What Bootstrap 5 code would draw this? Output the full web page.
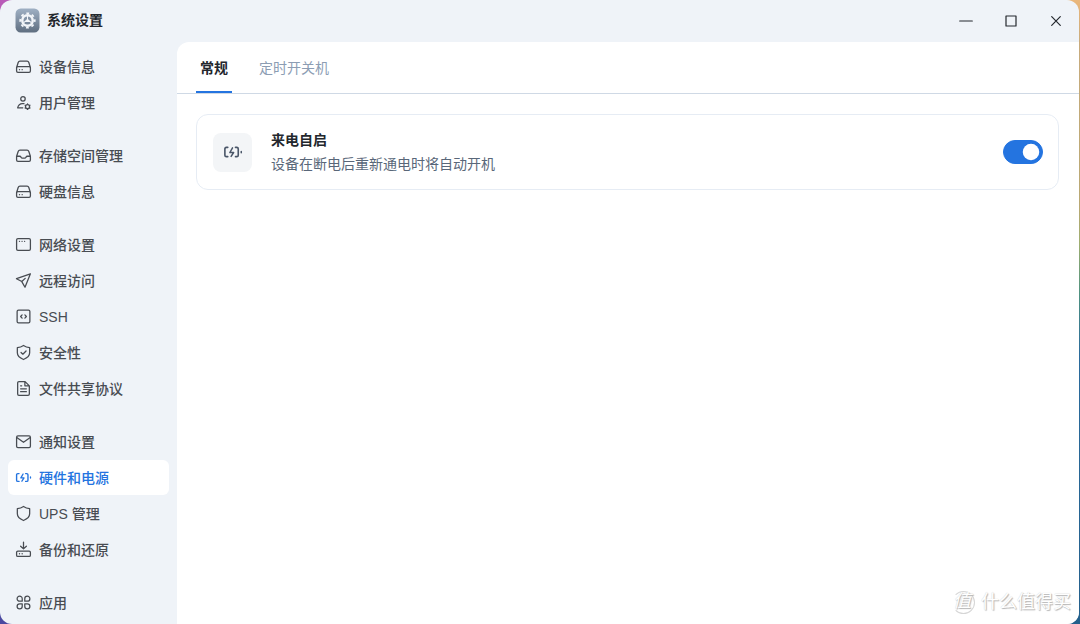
<!DOCTYPE html>
<html lang="zh-CN">
<head>
<meta charset="utf-8">
<meta name="viewport" content="width=device-width, initial-scale=1">
<title>系统设置</title>
<link href="https://cdn.jsdelivr.net/npm/bootstrap@5.3.0/dist/css/bootstrap.min.css" rel="stylesheet">
<style>
  :root { --accent: #2474e0; --chrome: #eff3f8; --ink: #23272d; }
  body { font-family: "Liberation Sans", "Noto Sans CJK SC", sans-serif; font-size: 14px; line-height: 20px; color: var(--ink);
    background: linear-gradient(#b95bb8, #4a49a0) left / 50% 100% no-repeat,
      linear-gradient(#eab77c, #c8ab7d 7%, #b9a873 33%, #9fae70 39%, #4f9280 47%, #2a6a9c 57%, #24608c) right / 50% 100% no-repeat; }
  .window { background: var(--chrome); border-radius: 12px; margin-right: 1px; overflow: hidden; }
  .titlebar { height: 42px; padding: 0 1px 2px 15px; }
  .titlebar h1 { font-size: 14px; line-height: 20px; margin-left: 7px; }
  .win-btn { width: 45px; height: 40px; border: 0; background: none; color: #24282e; }
  .sidebar { width: 177px; padding: 7px 8px 0; overflow: hidden; }
  .menu-group { margin-bottom: 18px; display: grid; gap: 1px; }
  .menu-link { height: 35px; padding: 0 7px; gap: 7px; border-radius: 6px; color: #484c52; text-decoration: none; white-space: nowrap; font-weight: 500; }
  .menu-link.active { background: #fff; color: var(--accent); }
  .icon { fill: none; stroke: currentColor; stroke-width: 1.2; stroke-linecap: round; stroke-linejoin: round; flex: none; }
  .pane { background: #fff; border-top-left-radius: 12px; min-width: 0; }
  .tabs { height: 52px; padding-left: 19px; gap: 23px; border-bottom: 1px solid #cfd9e5; }
  .tab-btn { border: 0; background: none; padding: 2px 4px 0; color: #8c9db3; border-bottom: 2px solid transparent; }
  .tab-btn.active { color: var(--ink); font-weight: 700; border-color: var(--accent); }
  .setting { margin: 20px 20px 0 19px; padding: 15px 15px 15px 16px; gap: 19px; border: 1px solid #e6ecf4; border-radius: 12px; }
  .tile { width: 39px; height: 39px; border-radius: 8px; background: #f3f5f7; color: #4a5668; }
  .setting label { line-height: 20px; }
  .setting p { color: #596779; line-height: 20px; margin-top: 4px; }
  .form-switch .toggle { width: 40px; height: 24px; margin: 0; float: none; }
  .form-switch .toggle:checked { background-color: var(--accent); border-color: var(--accent); }
  .form-switch .toggle:focus { box-shadow: none; }
  .watermark { right: 8px; bottom: 10px; gap: 6px; color: #fff; font-size: 18px; line-height: 24px; text-shadow: 1px 1px 1px #b4b4b4, 0 0 1px #c8c8c8; pointer-events: none; }
  .seal { width: 23px; height: 23px; border: 1px solid #d6d6d6; border-left-color: transparent; border-radius: 50%; line-height: 18px; font-style: italic; padding-right: 4px; }
</style>
</head>
<body>
<svg class="d-none" aria-hidden="true">
  <symbol id="drive" viewBox="0 0 16 16"><path d="M1.5 9 3 4.2Q3.4 3 4.700 3h6.600q1.300 0 1.700 1.200L14.500 9v3.200q0 1.300-1.300 1.300H2.800q-1.300 0-1.300-1.300V9Zm0 0q.2-.8 1.200-.8h10.600q1 0 1.200.8M4.200 11h.1M6.700 11h.1"/></symbol>
  <symbol id="user" viewBox="0 0 16 16"><circle cx="7.500" cy="4.500" r="2.100"/><path d="M8.500 9H7q-3.600 0-4.500 4h4.800"/><circle cx="11.800" cy="11.900" r="1.900"/><path d="M11.800 9.300v.4m0 4.400v.4m-2.300-3.900.4.200m3.800 2.200.4.200m-4.600 0 .4-.2m3.800-2.200.4-.2"/></symbol>
  <symbol id="inbox" viewBox="0 0 16 16"><path d="M1.500 8.700 3 4.200Q3.400 3 4.700 3h6.600q1.300 0 1.700 1.200l1.500 4.500v3.500q0 1.300-1.300 1.300H2.800q-1.300 0-1.300-1.300Zm0 0h2.800q1 0 1.400.9.400.9 1.300.9h2q.9 0 1.300-.9.400-.9 1.400-.9h2.800"/></symbol>
  <symbol id="network" viewBox="0 0 16 16"><rect x="1.500" y="2.500" width="13" height="11" rx="1.300"/><path d="M4.200 5h.1M6.600 5h.1M9 5h.1"/></symbol>
  <symbol id="plane" viewBox="0 0 16 16"><path d="M14.500 1.700 1.400 6.300l5 2.700 3 5.300ZM6.400 9l3.200-3"/></symbol>
  <symbol id="code" viewBox="0 0 16 16"><rect x="2" y="2" width="12" height="12" rx="1.300"/><path d="M6.700 6.500 5.300 8l1.400 1.500M9.300 6.500 10.700 8 9.300 9.500"/></symbol>
  <symbol id="shield" viewBox="0 0 16 16"><path d="M8 1.400q2.500 1.700 5.800 2.100v4.800q0 4-5.800 6.300-5.800-2.300-5.800-6.300V3.500Q5.500 3.100 8 1.400Z"/></symbol>
  <symbol id="check" viewBox="0 0 16 16"><path d="m5.700 8 1.700 1.600 3-3"/></symbol>
  <symbol id="file" viewBox="0 0 16 16"><path d="M3.700 1.500h5.800L13.500 5.500v7.700q0 1.300-1.300 1.300H3.700q-1.200 0-1.200-1.300V2.700q0-1.200 1.200-1.200Zm5.600 0v4h4.200M5.300 5.500h1M5.300 8.300h5.400M5.300 11h5.400"/></symbol>
  <symbol id="mail" viewBox="0 0 16 16"><rect x="1.500" y="2.700" width="13" height="11" rx="1.300"/><path d="m2 4.500 6 4.300 6-4.300"/></symbol>
  <symbol id="battery" viewBox="0 0 16 16"><path stroke-width="1.300" d="M3.800 4.300H2.700q-1.200 0-1.200 1.200v5q0 1.200 1.200 1.200h1.100m6.200-7.400h1q1.200 0 1.200 1.200v5q0 1.200-1.200 1.200h-1"/><path stroke-width="1.200" d="M7.600 4.700 5.500 8.400h3L6.500 11.500M14.600 7.500v1"/></symbol>
  <symbol id="backup" viewBox="0 0 16 16"><path d="M8 1v6.200M5.300 4.900 8 7.400l2.700-2.500"/><rect x="1.500" y="9.500" width="13" height="5" rx="1.200"/><path d="M4.200 12h.1M6.700 12h.1"/></symbol>
  <symbol id="apps" viewBox="0 0 16 16"><path d="M6.800 6.800H4.400a2.400 2.400 0 1 1 2.400-2.400ZM9.200 6.800V4.400a2.400 2.400 0 1 1 2.400 2.400ZM6.800 9.200v2.400a2.400 2.400 0 1 1-2.400-2.400ZM9.200 9.200h2.400a2.400 2.400 0 1 1-2.400 2.400Z"/></symbol>
</svg>
<div class="window vh-100 d-flex flex-column position-relative">
  <header class="titlebar d-flex align-items-center">
    <svg width="25" height="25" viewBox="0 0 24 24" aria-hidden="true">
      <defs><linearGradient id="tileFill" x2="0" y2="1"><stop stop-color="#9fb0c4"/><stop offset="1" stop-color="#5f6e80"/></linearGradient></defs>
      <rect x=".5" y=".5" width="23" height="23" rx="5" fill="url(#tileFill)"/>
      <circle cx="12" cy="12" r="5" fill="none" stroke="#f2f5f9" stroke-width="2.400"/>
      <circle cx="12" cy="12" r="6.900" fill="none" stroke="#f2f5f9" stroke-width="1.800" stroke-dasharray="2.700 2.719" stroke-dashoffset="1.350"/>
      <path d="M12 7v4l-3.600 3M12 11l3.600 3M12 10.500l1.500 2.500h-3Z" fill="none" stroke="#f2f5f9" stroke-width="1"/>
    </svg>
    <h1 class="fw-bold mb-0 me-auto">系统设置</h1>
    <button class="win-btn" aria-label="最小化"><svg class="icon" width="14" height="14"><path d="M.7 7h12.600"/></svg></button>
    <button class="win-btn" aria-label="最大化"><svg class="icon" width="14" height="14"><path d="M2 2h10v10H2Z"/></svg></button>
    <button class="win-btn" aria-label="关闭"><svg class="icon" width="14" height="14"><path d="m2.700 2.700 8.600 8.600m0-8.600-8.600 8.600"/></svg></button>
  </header>
  <div class="d-flex flex-grow-1">
    <nav class="sidebar flex-shrink-0" aria-label="设置">
      <div class="menu-group">
        <a href="#" class="menu-link d-flex align-items-center"><svg class="icon" width="17" height="17"><use href="#drive"/></svg>设备信息</a>
        <a href="#" class="menu-link d-flex align-items-center"><svg class="icon" width="17" height="17"><use href="#user"/></svg>用户管理</a>
      </div>
      <div class="menu-group">
        <a href="#" class="menu-link d-flex align-items-center"><svg class="icon" width="17" height="17"><use href="#inbox"/></svg>存储空间管理</a>
        <a href="#" class="menu-link d-flex align-items-center"><svg class="icon" width="17" height="17"><use href="#drive"/></svg>硬盘信息</a>
      </div>
      <div class="menu-group">
        <a href="#" class="menu-link d-flex align-items-center"><svg class="icon" width="17" height="17"><use href="#network"/></svg>网络设置</a>
        <a href="#" class="menu-link d-flex align-items-center"><svg class="icon" width="17" height="17"><use href="#plane"/></svg>远程访问</a>
        <a href="#" class="menu-link d-flex align-items-center"><svg class="icon" width="17" height="17"><use href="#code"/></svg>SSH</a>
        <a href="#" class="menu-link d-flex align-items-center"><svg class="icon" width="17" height="17"><use href="#shield"/><use href="#check"/></svg>安全性</a>
        <a href="#" class="menu-link d-flex align-items-center"><svg class="icon" width="17" height="17"><use href="#file"/></svg>文件共享协议</a>
      </div>
      <div class="menu-group">
        <a href="#" class="menu-link d-flex align-items-center"><svg class="icon" width="17" height="17"><use href="#mail"/></svg>通知设置</a>
        <a href="#" class="menu-link active d-flex align-items-center" aria-current="page"><svg class="icon" width="17" height="17"><use href="#battery"/></svg>硬件和电源</a>
        <a href="#" class="menu-link d-flex align-items-center"><svg class="icon" width="17" height="17"><use href="#shield"/></svg>UPS 管理</a>
        <a href="#" class="menu-link d-flex align-items-center"><svg class="icon" width="17" height="17"><use href="#backup"/></svg>备份和还原</a>
      </div>
      <div class="menu-group mb-0">
        <a href="#" class="menu-link d-flex align-items-center"><svg class="icon" width="17" height="17"><use href="#apps"/></svg>应用</a>
      </div>
    </nav>
    <main class="pane flex-grow-1">
      <div class="tabs d-flex" role="tablist">
        <button class="tab-btn active" role="tab" aria-selected="true">常规</button>
        <button class="tab-btn" role="tab" aria-selected="false">定时开关机</button>
      </div>
      <section class="setting d-flex align-items-center">
        <div class="tile d-flex align-items-center justify-content-center flex-shrink-0"><svg class="icon" width="20" height="20"><use href="#battery"/></svg></div>
        <div class="flex-grow-1">
          <label class="fw-bold d-block" for="autoStart">来电自启</label>
          <p class="mb-0">设备在断电后重新通电时将自动开机</p>
        </div>
        <div class="form-switch p-0 d-flex"><input class="form-check-input toggle" type="checkbox" role="switch" id="autoStart" checked></div>
      </section>
    </main>
  </div>
  <div class="watermark position-absolute d-flex align-items-center"><span class="seal text-center">值</span><span>什么值得买</span></div>
</div>
<script src="https://cdn.jsdelivr.net/npm/bootstrap@5.3.0/dist/js/bootstrap.bundle.min.js"></script>
</body>
</html>
